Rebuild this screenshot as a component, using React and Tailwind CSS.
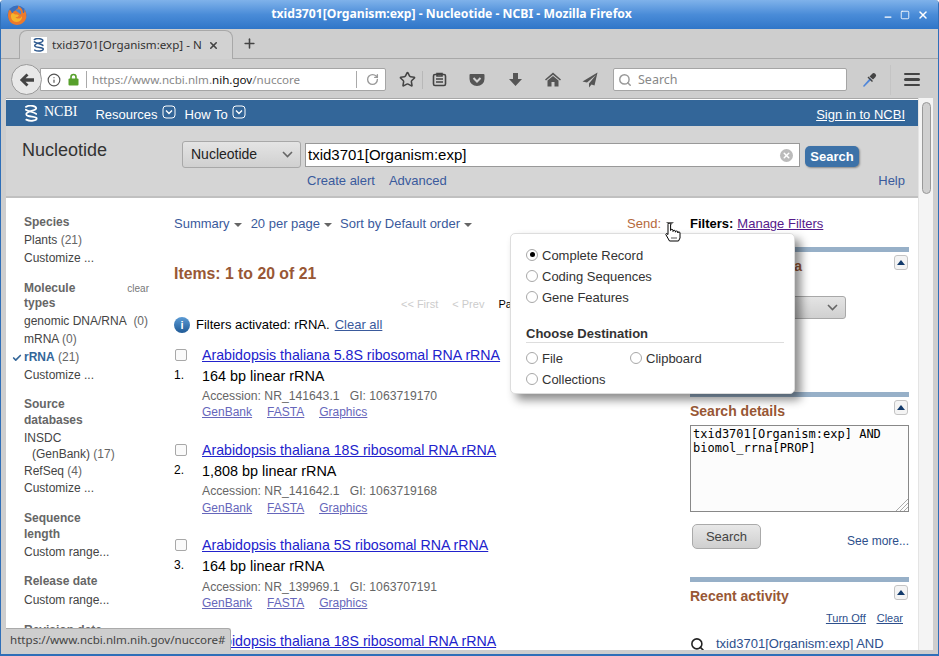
import { Info, RotateCw, Star, Search, Check, Minus, Square, X, Plus } from 'lucide-react';

const noto = { fontFamily: '"Noto Sans", sans-serif' };

const FirefoxLogo = () => (
    <svg width="22" height="22" viewBox="0 0 22 22">
        <circle cx="11" cy="11" r="9.5" fill="#3a6fbd" />
        <path d="M3 6 C1 11 2 17 6 19.5 C11 22.5 18 20.5 20 14.5 C21 11 20 7 18 5 C19 8 18 9 17 9 C17 6 15 3 12 1.5 C13 4 11 5 9.5 6.5 C8 7 7 7.5 7 9 C5.5 9 5 8 5 6.5 C4 6.5 3.5 6 3 6 Z" fill="#ec7a2c" />
        <path d="M7 9 C8 11 11 10 12.5 11 C13.5 12 11 13.5 9.5 13 C11 15.5 15 15 16 12 C16.5 14.5 14.5 18 10.5 18 C7 18 4.5 15 5 11 C5.5 10 6 9.5 7 9 Z" fill="#f5b52e" />
        <path d="M9.5 6.5 C11 5 13 4.5 14.5 6.5 C15.5 8 15.5 9.5 14.5 10.5 C13.5 9 11.5 8 9.5 6.5 Z" fill="#4a86cf" />
    </svg>
);

const Helix = ({ color, size = 18 }) => (
    <svg width={size} height={size} viewBox="0 0 18 18" fill="none" stroke={color} strokeWidth="1.9" strokeLinecap="round">
        <path d="M3 2 C7 -0.5 14 1 14 3.5 C14 6.5 4 6 3.5 9.5 C3 13 14 11.5 14.5 14 C14.5 16.5 8 18 3.5 15.5" />
        <path d="M3 5 C6 7 12 7.5 14 9.5" />
    </svg>
);

const CollapseButton = () => (
    <div className="flex h-[15px] w-[14px] items-center justify-center rounded-[3px] border border-[#c4c4c4] bg-[#f4f4f4]">
        <div className="h-0 w-0 border-x-[4px] border-b-[5px] border-x-transparent border-b-[#123a6b]" />
    </div>
);

const Caret = () => <span className="ml-1 inline-block h-0 w-0 border-x-[4px] border-t-[4px] border-x-transparent border-t-[#666] align-middle" />;

const MenuArrow = () => (
    <svg width="14" height="14" viewBox="0 0 14 14" fill="none" stroke="white" strokeWidth="1">
        <rect x="1" y="1" width="12" height="12" rx="3" />
        <path d="M4 5.5 L7 8.5 L10 5.5" strokeWidth="1.4" />
    </svg>
);

const Radio = ({ label, checked }) => (
    <label className="flex h-[21px] items-center gap-[4px] text-[13px] text-[#333]">
        <span className="mb-[2px] flex h-[12px] w-[12px] items-center justify-center rounded-full border border-[#a8a8a8] bg-white">
            {checked && <span className="h-[5px] w-[5px] rounded-full bg-black" />}
        </span>
        {label}
    </label>
);

const SideTitle = ({ children }) => <div className="text-[12px] font-bold leading-[16px] text-[#666]">{children}</div>;
const SideLink = ({ children, h = 'h-[18px]' }) => <div className={`${h} text-[12px] leading-[18px] text-[#444]`}>{children}</div>;
const Count = ({ children }) => <span className="text-[#666]">{children}</span>;

const Result = ({ n, title, size, acc, gi, last, h = 'h-[95px]', accMt = 'mt-[3px]', linkMt = '' }) => (
    <div className={`flex ${last ? '' : h}`}>
        <div className="w-[28px] pt-[3px]">
            <div className="ml-[1px] h-[12px] w-[12px] rounded-[2px] border border-[#a8a8a8] bg-[#fafafa]" />
            <div className="mt-[8px] text-[12px] leading-[12px] text-black">{n}.</div>
        </div>
        <div>
            <a className="block text-[14.2px] leading-[18px] text-[#2222cc] underline">{title}</a>
            {!last && (
                <>
                    <div className="mt-[3px] text-[14.4px] leading-[18px] text-black">{size}</div>
                    <div className={`${accMt} text-[12.2px] leading-[16px] text-[#666]`}>
                        Accession: {acc}&nbsp;&nbsp; GI: {gi}
                    </div>
                    <div className={`${linkMt} flex gap-[15px] text-[12px] leading-[16px] text-[#6666bb] underline`}>
                        <a>GenBank</a>
                        <a>FASTA</a>
                        <a>Graphics</a>
                    </div>
                </>
            )}
        </div>
    </div>
);

const SectionBar = ({ title, mt }) => (
    <div className={mt}>
        <div className="h-[5px] bg-[#97b0c8]" />
        <div className="mt-[3px] flex items-start justify-between pr-[1px]">
            <div className="mt-[2px] text-[14px] font-bold leading-[18px] text-[#985735]">{title}</div>
            <CollapseButton />
        </div>
    </div>
);

const App = () => {
    return (
        <div className="relative flex h-[656px] w-[939px] flex-col overflow-hidden rounded-t-[4px] border-x border-b-[2px] border-[#2f6fb8] bg-[#cecece]" style={{ fontFamily: '"Liberation Sans", Arial, sans-serif' }}>
            {/* title bar */}
            <div className="flex h-[29px] shrink-0 items-center bg-gradient-to-b from-[#7fb2ea] via-[#4a8cd8] to-[#2f76c8] pl-[5px] pr-[9px]">
                <FirefoxLogo />
                <div className="flex-1 pr-[8px] text-center text-[12.2px] font-bold text-white" style={noto}>
                    txid3701[Organism:exp] - Nucleotide - NCBI - Mozilla Firefox
                </div>
                <div className="flex items-center gap-[7px] text-white">
                    <Minus size={10} strokeWidth={3} className="mt-[5px]" />
                    <Square size={10} strokeWidth={2} />
                    <X size={12} strokeWidth={3} />
                </div>
            </div>

            {/* tab strip */}
            <div className="flex h-[30px] shrink-0 items-end border-b border-[#a8a8a8] pl-[18px]">
                <div className="relative top-[1px] flex h-[29px] w-[214px] items-center rounded-t-[8px] border border-b-0 border-[#a8a8a8] bg-[#d2d2d2] pl-[11px]">
                    <div className="flex h-[16px] w-[16px] items-center justify-center bg-white">
                        <Helix color="#2f5a8f" size={14} />
                    </div>
                    <span className="ml-[5px] w-[153px] overflow-hidden whitespace-nowrap text-[11.6px] text-[#333]" style={noto}>txid3701[Organism:exp] - N</span>
                    <X size={11} strokeWidth={3.5} className="ml-[3px] text-[#444]" />
                </div>
                <Plus size={15} strokeWidth={2.5} className="mb-[7px] ml-[9px] text-[#444]" />
            </div>

            {/* nav bar */}
            <div className="flex h-[39px] shrink-0 items-center pl-[10px] pt-[2px] text-[#444]">
                <div className="relative z-10 flex h-[31px] w-[31px] items-center justify-center rounded-full border border-[#9a9a9a] bg-[#e8e8e8]">
                    <svg width="16" height="14" viewBox="0 0 16 14" fill="#444">
                        <path d="M7.5 0.5 L9.5 2.5 L6.5 5.2 H15 V8.8 H6.5 L9.5 11.5 L7.5 13.5 L0.8 7 Z" />
                    </svg>
                </div>
                <div className="-ml-[2px] flex h-[23px] w-[346px] items-center rounded-r-[2px] border border-[#a5a5a5] bg-white">
                    <Info size={14} className="ml-[6px] text-[#555]" />
                    <svg width="11" height="13" viewBox="0 0 11 13" className="ml-[7px]" fill="none">
                        <path d="M3 6 V4 A2.5 2.5 0 0 1 8 4 V6" stroke="#57a02b" strokeWidth="1.6" />
                        <rect x="0.5" y="5.5" width="10" height="7" rx="1" fill="#57a02b" />
                    </svg>
                    <div className="ml-[7px] h-[17px] w-px bg-[#aaa]" />
                    <div className="ml-[5px] w-[264px] text-[11.6px] text-[#888]" style={noto}>
                        https://www.ncbi.nlm.<span className="text-[#111]">nih.gov</span>/nuccore
                    </div>
                    <div className="h-[17px] w-px bg-[#aaa]" />
                    <RotateCw size={13} strokeWidth={2.5} className="ml-[9px] text-[#999]" />
                </div>
                <Star size={17} strokeWidth={2.2} className="ml-[13px]" />
                <div className="ml-[6px] h-[18px] w-px bg-[#b8b8b8]" />
                <svg width="15" height="15" viewBox="0 0 15 15" className="ml-[9px]" fill="none" stroke="#444" strokeWidth="1.6">
                    <rect x="1.5" y="2.5" width="12" height="11" rx="1.5" />
                    <path d="M5 1.5 H10 V4 H5 Z M4 7 H11 M4 10 H11" />
                </svg>
                <svg width="16" height="14" viewBox="0 0 16 14" className="ml-[22px]" fill="#555">
                    <path d="M1.5 1 H14.5 A1 1 0 0 1 15.5 2 V6 A7.5 7 0 0 1 0.5 6 V2 A1 1 0 0 1 1.5 1 Z" />
                    <path d="M4.5 5 L8 8.5 L11.5 5" fill="none" stroke="#d0d0d0" strokeWidth="2" />
                </svg>
                <svg width="15" height="15" viewBox="0 0 15 15" className="ml-[23px]" fill="#555">
                    <path d="M5 1 H10 V7 H14 L7.5 14 L1 7 H5 Z" />
                </svg>
                <svg width="16" height="15" viewBox="0 0 16 15" className="ml-[22px]" fill="#555">
                    <path d="M8 0.5 L16 7.5 L15 8.5 L8 2.8 L1 8.5 L0 7.5 Z" />
                    <path d="M8 4 L13.5 8.5 V14.5 H9.5 V10 H6.5 V14.5 H2.5 V8.5 Z" />
                </svg>
                <svg width="16" height="16" viewBox="0 0 16 16" className="ml-[21px]" fill="#555">
                    <path d="M15.5 0.5 L0.5 9.5 L5 10.5 L14 3 L7 11.5 V15.5 L9.5 12.5 L12.5 13.5 Z" />
                </svg>
                <div className="ml-[15px] flex h-[23px] w-[234px] items-center rounded-[2px] border border-[#a5a5a5] bg-white text-[12.5px] text-[#888]" style={noto}>
                    <Search size={14} strokeWidth={2.5} className="ml-[4px] mr-[6px] text-[#999]" />
                    <span className="mt-[1px]">Search</span>
                </div>
                <svg width="16" height="16" viewBox="0 0 16 16" className="ml-[14px]">
                    <path d="M2 14 L9 6 L10.5 7.5 L3 15 Z" fill="#4f86d9" />
                    <path d="M8.5 4.5 L11 2 A2 2 0 0 1 14.5 5 L12 7.5 Z M7.5 4.5 L12 9 L11 10 L6.5 5.5 Z" fill="#444" />
                </svg>
                <div className="ml-[13px] h-[30px] w-px bg-[#c4c4c4]" />
                <div className="ml-[13px] flex w-[16px] flex-col gap-[3px]">
                    <div className="h-[2.5px] rounded-full bg-[#444]" />
                    <div className="h-[2.5px] rounded-full bg-[#444]" />
                    <div className="h-[2.5px] rounded-full bg-[#444]" />
                </div>
            </div>

            {/* page viewport */}
            <div className="flex min-h-0 flex-1 pb-[4px] pl-[5px] pr-[5px]">
                <div className="min-w-0 flex-1 overflow-hidden border-t border-[#a8a8a8] bg-white">
                    {/* ncbi bar */}
                    <div className="mt-px flex h-[26px] items-center bg-[#336699] pl-[17px] pr-[13px] text-white">
                        <Helix color="white" size={17} />
                        <span className="ml-[4px] mt-[-3px] text-[14px]" style={{ fontFamily: '"Liberation Serif", serif' }}>NCBI</span>
                        <span className="ml-[18px] mt-[4px] text-[13px]">Resources</span>
                        <span className="-mt-[2px] ml-[4px]"><MenuArrow /></span>
                        <span className="ml-[9px] mt-[4px] text-[13px]">How To</span>
                        <span className="-mt-[2px] ml-[4px]"><MenuArrow /></span>
                        <a className="ml-auto mt-[4px] text-[13px] underline">Sign in to NCBI</a>
                    </div>

                    {/* search header */}
                    <div className="relative h-[72px] border-b-[2px] border-[#c0c0c0] bg-[#d5d5d5]">
                        <div className="flex pl-[16px] pt-[15px]">
                            <div className="-mt-[1px] w-[160px] text-[18px] leading-[20px] text-[#333]">Nucleotide</div>
                            <div className="flex h-[27px] w-[119px] items-center justify-between rounded-[3px] border border-[#a8a8a8] bg-gradient-to-b from-[#e4e4e4] to-[#d0d0d0] pl-[8px] pr-[7px] text-[14px] text-[#222]">
                                Nucleotide
                                <svg width="11" height="7" viewBox="0 0 11 7" fill="none" stroke="#666" strokeWidth="1.6"><path d="M1 1 L5.5 5.5 L10 1" /></svg>
                            </div>
                            <div className="ml-[4px] mt-[2px] flex h-[24px] w-[495px] items-center justify-between border border-[#999] bg-white pl-[2px] pr-[6px] text-[15px] text-black">
                                txid3701[Organism:exp]
                                <span className="flex h-[13px] w-[13px] items-center justify-center rounded-full bg-[#bbb]"><X size={9} strokeWidth={4} className="text-white" /></span>
                            </div>
                            <div className="ml-[5px] mt-[5px] flex h-[21px] w-[54px] items-center justify-center rounded-[5px] bg-[#3d72a8] text-[13px] font-bold text-white shadow-[1px_1px_2px_#888]">
                                Search
                            </div>
                        </div>
                        <div className="flex pl-[301px] pr-[13px] pt-[5px] text-[13px] leading-[16px] text-[#3a5a9c]">
                            <a>Create alert</a>
                            <a className="ml-[14px]">Advanced</a>
                            <a className="ml-auto">Help</a>
                        </div>
                    </div>

                    {/* content columns */}
                    <div className="flex">
                        {/* facets */}
                        <div className="w-[168px] shrink-0 pl-[18px] pt-[16px]">
                            <SideTitle>Species</SideTitle>
                            <div className="pt-[1px]">
                                <SideLink>Plants <Count>(21)</Count></SideLink>
                                <SideLink>Customize ...</SideLink>
                            </div>

                            <div className="mt-[14px] flex justify-between pr-[25px] leading-[15px]">
                                <div className="text-[12px] font-bold leading-[15px] text-[#666]">Molecule<br />types</div>
                                <span className="text-[10px] leading-[16px] text-[#777]">clear</span>
                            </div>
                            <div className="pt-[1px]">
                                <SideLink>genomic DNA/RNA&nbsp; <Count>(0)</Count></SideLink>
                                <SideLink>mRNA <Count>(0)</Count></SideLink>
                                <div className="relative">
                                    <Check size={10} strokeWidth={4} className="absolute -left-[12px] top-[5px] text-[#336699]" />
                                    <SideLink><b className="text-[#336699]">rRNA</b> <Count>(21)</Count></SideLink>
                                </div>
                                <SideLink>Customize ...</SideLink>
                            </div>

                            <div className="mt-[12px]"><SideTitle>Source<br />databases</SideTitle></div>
                            <div className="pt-[1px]">
                                <SideLink h="h-[16px]">INSDC</SideLink>
                                <SideLink h="h-[17px]"><span className="pl-[8px]">(GenBank) <Count>(17)</Count></span></SideLink>
                                <SideLink h="h-[17px]">RefSeq <Count>(4)</Count></SideLink>
                                <SideLink>Customize ...</SideLink>
                            </div>

                            <div className="mt-[13px]"><SideTitle>Sequence<br />length</SideTitle></div>
                            <div className="pt-[1px]"><SideLink>Custom range...</SideLink></div>

                            <div className="mt-[12px]"><SideTitle>Release date</SideTitle></div>
                            <div className="pt-[2px]"><SideLink>Custom range...</SideLink></div>

                            <div className="mt-[13px]"><SideTitle>Revision date</SideTitle></div>
                        </div>

                        {/* results */}
                        <div className="w-[516px] shrink-0 pt-[16px]">
                            <div className="flex h-[20px] items-center pr-[14px] text-[13px] text-[#3a5a9c]">
                                <span>Summary<Caret /></span>
                                <span className="ml-[9px]">20 per page<Caret /></span>
                                <span className="ml-[8px]">Sort by Default order<Caret /></span>
                                <span className="ml-auto text-[#b5693c]">Send:</span>
                                <span className="ml-[5px] mr-[2px] inline-block h-0 w-0 border-x-[4px] border-t-[4px] border-x-transparent border-t-[#666]" />
                            </div>
                            <div className="mt-[30px] text-[15.8px] font-bold leading-[20px] text-[#985735]">Items: 1 to 20 of 21</div>
                            <div className="mt-[12px] flex h-[16px] items-center pl-[227px] text-[11px] text-[#ccc]">
                                <span>&lt;&lt; First</span>
                                <span className="ml-[14px]">&lt; Prev</span>
                                <span className="ml-[14px] text-black">Page</span>
                            </div>
                            <div className="mt-[4px] flex h-[18px] items-center text-[13px] text-black">
                                <span className="mr-[6px] flex h-[16px] w-[16px] items-center justify-center rounded-full bg-gradient-to-b from-[#5b9bd5] to-[#1f5a96] text-[11px] font-bold text-white">i</span>
                                Filters activated: rRNA.
                                <a className="ml-[5px] text-[#3a5a9c] underline">Clear all</a>
                            </div>
                            <div className="mt-[12px]">
                                <Result n={1} title="Arabidopsis thaliana 5.8S ribosomal RNA rRNA" size="164 bp linear rRNA" acc="NR_141643.1" gi="1063719170" />
                                <Result n={2} linkMt="mt-[1px]" title="Arabidopsis thaliana 18S ribosomal RNA rRNA" size="1,808 bp linear rRNA" acc="NR_141642.1" gi="1063719168" />
                                <Result n={3} h="h-[96px]" accMt="mt-[4px]" title="Arabidopsis thaliana 5S ribosomal RNA rRNA" size="164 bp linear rRNA" acc="NR_139969.1" gi="1063707191" />
                                <Result n={4} title="Arabidopsis thaliana 18S ribosomal RNA rRNA" last />
                            </div>
                        </div>

                        {/* right column */}
                        <div className="w-[219px] shrink-0 pt-[16px]">
                            <div className="flex h-[20px] items-center text-[13px]">
                                <b className="text-black">Filters:</b>
                                <a className="ml-[4px] text-[#551a8b] underline">Manage Filters</a>
                            </div>
                            <SectionBar title="Find related data" mt="mt-[13px]" />
                            <div className="mt-[21px] flex h-[23px] w-[156px] items-center justify-end rounded-[3px] border border-[#a8a8a8] bg-gradient-to-b from-[#e4e4e4] to-[#d0d0d0] pr-[7px]">
                                <svg width="11" height="7" viewBox="0 0 11 7" fill="none" stroke="#666" strokeWidth="1.6"><path d="M1 1 L5.5 5.5 L10 1" /></svg>
                            </div>
                            <SectionBar title="Search details" mt="mt-[73px]" />
                            <div className="relative mt-[5px]">
                                <textarea
                                    readOnly
                                    className="block h-[87px] w-[219px] resize-none border border-[#888] bg-[#fcfcfc] px-[2px] pt-[1px] text-[12px] leading-[14px] text-black"
                                    style={{ fontFamily: '"DejaVu Sans Mono", monospace' }}
                                    defaultValue={'txid3701[Organism:exp] AND\nbiomol_rrna[PROP]'}
                                />
                                {/* resize grip */}
                                <svg width="13" height="13" viewBox="0 0 13 13" className="absolute bottom-[1px] right-[1px]" stroke="#aaa" strokeWidth="1">
                                    <path d="M1 13 L13 1 M5 13 L13 5 M9 13 L13 9" />
                                </svg>
                            </div>
                            <div className="mt-[12px] flex items-start justify-between">
                                <div className="ml-[2px] flex h-[25px] w-[69px] items-center justify-center rounded-[5px] border border-[#aaa] bg-gradient-to-b from-[#e8e8e8] to-[#cfcfcf] text-[13px] text-[#444]">
                                    Search
                                </div>
                                <a className="mt-[10px] text-[12px] leading-[14px] text-[#2d4f8c]">See more...</a>
                            </div>
                            <SectionBar title="Recent activity" mt="mt-[28px]" />
                            <div className="mt-[6px] flex justify-end gap-[11px] pr-[6px] text-[11px] leading-[14px] text-[#2d4f8c] underline">
                                <a>Turn Off</a>
                                <a>Clear</a>
                            </div>
                            <div className="mt-[11px] flex items-center text-[13px] leading-[16px] text-[#2d4f8c]">
                                <Search size={15} strokeWidth={2.5} className="mr-[11px] text-[#222]" />
                                txid3701[Organism:exp] AND
                            </div>
                        </div>
                    </div>
                </div>

                {/* scrollbar */}
                <div className="w-[15px] shrink-0 border-l border-[#e4e4e4] bg-[#f4f4f4] pl-[3px] pt-[4px]">
                    <div className="h-[92px] w-[9px] rounded-full border border-[#999] bg-[#d0d0d0]" />
                </div>
            </div>

            {/* status tooltip */}
            <div className="absolute bottom-[4px] left-[5px] flex h-[22px] w-[225px] items-center rounded-tr-[3px] border-r border-t border-[#aaa] bg-[#cecece] pl-[4px] text-[11.6px] text-[#444]" style={noto}>
                https://www.ncbi.nlm.nih.gov/nuccore#
            </div>

            {/* send to popup */}
            <div className="absolute left-[509px] top-[233px] h-[161px] w-[285px] rounded-[5px] border border-[#ddd] bg-white pl-[15px] pr-[10px] pt-[11px] shadow-[6px_6px_10px_rgba(0,0,0,0.45)]">
                <Radio label="Complete Record" checked />
                <Radio label="Coding Sequences" />
                <Radio label="Gene Features" />
                <div className="mt-[17px] border-b border-[#ddd] text-[13px] font-bold leading-[17px] text-[#333]">Choose Destination</div>
                <div className="mt-[5px] grid grid-cols-[104px_1fr]">
                    <Radio label="File" />
                    <Radio label="Clipboard" />
                    <Radio label="Collections" />
                </div>
            </div>

            {/* mouse cursor */}
            <svg width="16" height="19" viewBox="0 0 16 19" className="absolute left-[664px] top-[223px]">
                <path d="M3 1.5 A1.3 1.3 0 0 1 5.6 1.5 V7.5 A1.2 1.2 0 0 1 8 7.5 V8.5 A1.2 1.2 0 0 1 10.4 8.5 V9.2 A1.2 1.2 0 0 1 12.8 9.2 V10 A1.1 1.1 0 0 1 15 10 V15 L13.5 18 H4.5 L0.8 11.5 L1.5 10.5 L3 11.5 Z" fill="white" stroke="black" strokeWidth="1" />
                <path d="M7 14 V16 M9 14 V16 M11 14 V16" stroke="#555" strokeWidth="1" />
            </svg>
        </div>
    );
};

export default App;
